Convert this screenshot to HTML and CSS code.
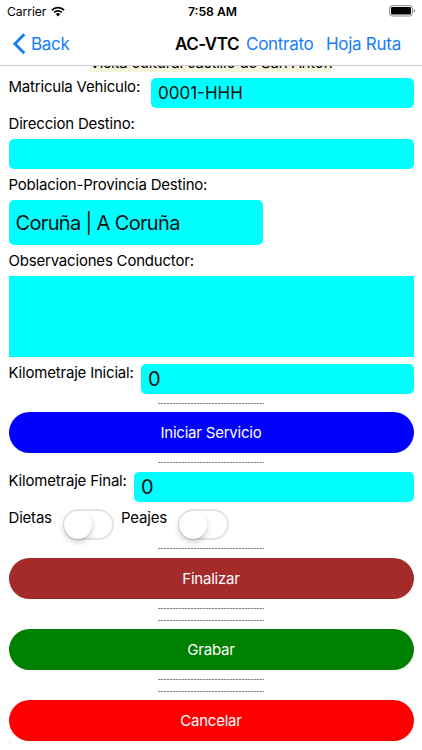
FILE: index.html
```
<!DOCTYPE html>
<html lang="es">
<head>
  <meta charset="UTF-8">
  <meta name="viewport" content="width=device-width, initial-scale=1.0">
  <title>AC-VTC</title>
  <link rel="stylesheet" href="styles.css">
</head>
<body>

<header>
  <div class="status-bar">
    <div class="carrier">
      <span>Carrier</span>
      <svg class="wifi" width="14" height="11" viewBox="0 0 14 11">
        <path d="M0.9 4.1 A8.7 8.7 0 0 1 13.1 4.1" fill="none" stroke="#000" stroke-width="1.8"/>
        <path d="M3.1 6.4 A5.6 5.6 0 0 1 10.9 6.4" fill="none" stroke="#000" stroke-width="1.7"/>
        <path d="M4.7 8 A3.3 3.3 0 0 1 9.3 8 L7 10.4 Z"/>
      </svg>
    </div>
    <div class="clock">7:58 AM</div>
    <svg class="battery" width="27" height="12" viewBox="0 0 27 12">
      <rect x="0.6" y="0.6" width="22.8" height="10.4" rx="2.4" fill="#fff" stroke="#8c8c8c"/>
      <rect x="2" y="2" width="20" height="7.6" rx="1"/>
      <path d="M24.6 4 Q26.2 4.6 26.2 5.8 Q26.2 7 24.6 7.6 Z" fill="#8c8c8c"/>
    </svg>
  </div>
  <nav class="nav-bar">
    <a class="back" href="#">
      <svg width="13" height="22" viewBox="0 0 13 22">
        <path d="M11.3 1.3 L1.9 10.8 L11.3 20.3" fill="none" stroke="#157efb" stroke-width="2.9"/>
      </svg>
      <span>Back</span>
    </a>
    <span class="title">AC-VTC</span>
    <a class="contrato" href="#">Contrato</a>
    <a class="hoja" href="#">Hoja Ruta</a>
  </nav>
</header>

<main>
  <div class="visita"><span>Visita cultural castillo de San Anton</span></div>

  <div class="row">
    <label class="w-matricula">Matricula Vehiculo:</label>
    <div class="field matricula">0001-HHH</div>
  </div>

  <label class="line">Direccion Destino:</label>
  <div class="field"></div>

  <label class="line">Poblacion-Provincia Destino:</label>
  <div class="field poblacion">Coruña | A Coruña</div>

  <label class="line">Observaciones Conductor:</label>
  <div class="observaciones"></div>

  <div class="row">
    <label class="w-inicial">Kilometraje Inicial:</label>
    <div class="field">0</div>
  </div>

  <div class="dashes"></div>
  <button class="iniciar">Iniciar Servicio</button>
  <div class="dashes"></div>

  <div class="row">
    <label class="w-final">Kilometraje Final:</label>
    <div class="field">0</div>
  </div>

  <div class="row switches">
    <label class="w-dietas">Dietas</label>
    <div class="switch"></div>
    <label class="w-peajes">Peajes</label>
    <div class="switch"></div>
  </div>

  <div class="dashes"></div>
  <button class="finalizar">Finalizar</button>
  <div class="dashes double"></div>
  <button class="grabar">Grabar</button>
  <div class="dashes double"></div>
  <button class="cancelar">Cancelar</button>
  <div class="next-field"></div>
</main>

</body>
</html>
```

FILE: styles.css
```
* {
    box-sizing: border-box;
}

body {
    margin: 0;
    height: 750px;
    overflow: hidden;
    background: #fff;
    color: #000;
    font-family: Inter, 'Liberation Sans', sans-serif;
}

header {
    height: 66px;
    border-bottom: 1px solid #cdcdcf;
}

.status-bar {
    height: 22px;
    padding: 0 6px 0 7px;
    display: grid;
    grid-template-columns: 1fr auto 1fr;
    align-items: center;
    font-size: 12.2px;
}

.carrier {
    display: flex;
    align-items: center;
    gap: 5px;
    letter-spacing: -0.1px;
}

.clock {
    padding-left: 2px;
    font-weight: 600;
}

.battery {
    justify-self: end;
}

.nav-bar {
    height: 43px;
    padding-left: 13px;
    display: flex;
    align-items: center;
    font-size: 17px;
    letter-spacing: -0.28px;
}

.nav-bar a {
    color: #157efb;
    text-decoration: none;
}

.back {
    width: 162px;
    display: flex;
    align-items: center;
    gap: 5px;
}

.title {
    width: 71px;
    font-weight: 600;
    letter-spacing: -0.5px;
}

.contrato {
    width: 80px;
}

main {
    padding: 0 8.5px;
}

.visita {
    height: 6px;
    margin-bottom: 6px;
    overflow: hidden;
    display: flex;
    justify-content: center;
    align-items: flex-end;
    font-size: 15px;
    line-height: 18px;
    letter-spacing: -0.18px;
}

.visita span {
    background: #f5f5dc;
}

label {
    display: block;
    font-size: 15px;
    line-height: 18px;
    letter-spacing: -0.2px;
    white-space: nowrap;
}

.line {
    height: 30.8px;
    padding-top: 7px;
}

.row {
    display: flex;
}

.field {
    flex: 1;
    height: 30px;
    padding-left: 7px;
    background: #00ffff;
    border-radius: 5px;
    font-size: 20px;
    line-height: 31px;
    color: #111;
}

.matricula {
    font-size: 17px;
    line-height: 30px;
}

.poblacion {
    width: 254.5px;
    height: 45.5px;
    line-height: 46px;
    letter-spacing: -0.65px;
}

.observaciones {
    height: 81.5px;
    margin-bottom: 6.5px;
    background: #00ffff;
}

.w-matricula { width: 142.5px; }
.w-inicial { width: 132.5px; }
.w-final { width: 125.5px; }
.w-dietas { width: 54.5px; }
.w-peajes { width: 56.5px; }

.dashes {
    height: 18.5px;
    width: 106px;
    margin: 0 auto;
    background: repeating-linear-gradient(to right, #888 0 2px, #ccc 2px 3px) 0 9px / 100% 1px no-repeat;
}

.double {
    height: 30.3px;
    background:
        repeating-linear-gradient(to right, #888 0 2px, #ccc 2px 3px) 0 9px / 100% 1px no-repeat,
        repeating-linear-gradient(to right, #888 0 2px, #ccc 2px 3px) 0 21px / 100% 1px no-repeat;
}

button {
    display: block;
    width: 100%;
    height: 41px;
    padding: 0;
    border: none;
    border-radius: 20.5px;
    color: #fff;
    font-family: inherit;
    font-size: 15px;
    letter-spacing: -0.22px;
}

.iniciar { background: #0000ff; }
.finalizar { background: #a52a2a; }
.grabar { background: #008000; }
.cancelar { background: #ff0000; }

.switches {
    height: 37.5px;
    padding-top: 7px;
}

.switch {
    width: 51px;
    height: 31px;
    margin-right: 7px;
    border: 2px solid #e4e4e4;
    border-radius: 16px;
}

.switch::before {
    content: "";
    display: block;
    width: 28px;
    height: 28px;
    margin-left: -1px;
    border-radius: 50%;
    background: #fff;
    box-shadow: 0 3px 6px rgba(0, 0, 0, 0.2), 0 1px 1px rgba(0, 0, 0, 0.12);
}

.next-field {
    width: 1px;
    height: 4px;
    background: #d5e8e8;
}
```
